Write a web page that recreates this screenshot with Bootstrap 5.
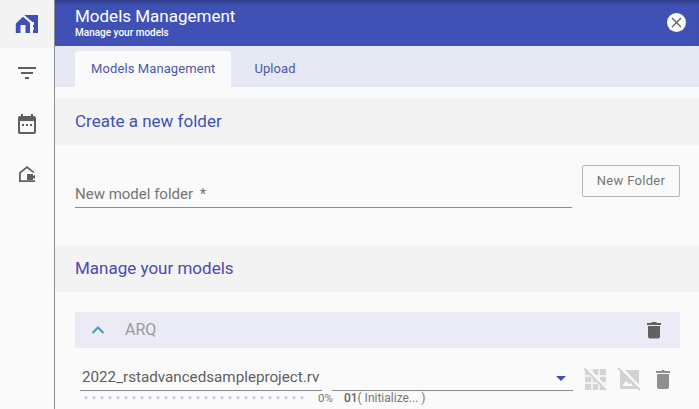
<!DOCTYPE html>
<html lang="en">
<head>
  <meta charset="UTF-8">
  <title>Models Management</title>
  <link href="https://cdn.jsdelivr.net/npm/bootstrap@5.3.0/dist/css/bootstrap.min.css" rel="stylesheet">
  <style>
    html, body { height: 100%; }
    body {
      font-family: Roboto, "Liberation Sans", sans-serif;
      background: #fafafa;
      overflow: hidden;
    }
    .side-rail {
      width: 55px;
      height: 409px;
      background: #fafafa;
      border-right: 1px solid #8e8e8e;
    }
    .rail-item { height: 50px; }
    .rail-item.is-active { height: 48px; background: #f3f3f3; }
    .rail-item.is-low { margin-top: 1px; }
    .main-pane { width: 644px; }
    .top-title {
      height: 46px;
      background: #3f51b5;
      color: #fff;
      padding: 6px 13px 0 20px;
      box-shadow: inset 0 5px 4px -3px rgba(0, 0, 0, .3);
    }
    .top-title h1 { font-size: 17px; font-weight: 400; line-height: 21px; margin: 0; }
    .top-title p { font-size: 10px; line-height: 11px; margin: 0; font-weight: 500; }
    .close-dot {
      width: 19px;
      height: 19px;
      background: #fafafa;
      border-radius: 50%;
      margin-top: 7px;
    }
    .tab-strip { height: 41px; background: #e6e8f3; padding: 5px 0 0 20px; }
    .tab-item {
      font-size: 13px;
      letter-spacing: .1px;
      height: 36px;
      line-height: 36px;
      padding: 0 16px;
      color: #4a57b0;
      border-radius: 4px 4px 0 0;
    }
    .tab-item.is-active { background: #fafafa; }
    .tab-item.is-plain { padding: 0 23px; }
    .section-band {
      height: 47px;
      margin-top: 11px;
      background: #f3f3f3;
      color: #3f51b5;
      font-size: 17px;
      line-height: 47px;
      padding-left: 20px;
    }
    .folder-row { height: 100px; padding: 20px 19px 0 20px; }
    .fake-field {
      flex: 1;
      height: 43px;
      margin-right: 10px;
      border-bottom: 1px solid #8c8c8c;
      color: #757575;
      font-size: 15px;
      padding-top: 19px;
      line-height: 20px;
    }
    .req-mark { margin-left: 3px; }
    .new-btn {
      width: 98px;
      height: 32px;
      font-size: 13px;
      letter-spacing: .3px;
      color: #757575;
      background: transparent;
      border: 1px solid #b5b5b5;
      border-radius: 2px;
      padding: 0;
    }
    .section-band.is-second { margin-top: 0; color: #5048ad; }
    .group-head {
      height: 36px;
      margin: 20px 19px 0 20px;
      background: #eaebf4;
      padding: 0 19px 0 15px;
      color: #9a9a9a;
      font-size: 16px;
    }
    .group-head span { margin-left: 19px; }
    .model-row { padding: 8px 27px 0 25px; }
    .model-select {
      flex: 1;
      position: relative;
      height: 35px;
      border-bottom: 1px solid #8c8c8c;
      color: #5f5f5f;
      font-size: 15.2px;
      line-height: 42px;
      padding-left: 2px;
    }
    .select-gap {
      position: absolute;
      left: 242px;
      bottom: -1px;
      width: 10px;
      height: 1px;
      background: #fafafa;
    }
    .select-caret {
      position: absolute;
      right: 7px;
      top: 20px;
      border-left: 5px solid transparent;
      border-right: 5px solid transparent;
      border-top: 5px solid #3f51b5;
    }
    .model-tools { gap: 10px; margin-left: 10px; padding-top: 11px; }
    .progress-row { padding-left: 27px; height: 14px; color: #777; font-size: 11.5px; line-height: 14px; }
    .dot-line {
      width: 226px;
      height: 5px;
      margin-top: 4px;
      background-image: radial-gradient(circle, #ccd1ea 1.4px, transparent 1.9px);
      background-size: 8px 5px;
    }
    .pct-label { margin-left: 10px; }
    .step-label { margin-left: 11px; font-size: 12px; }
    .step-label b { font-weight: 500; color: #666; }
  </style>
</head>
<body>
  <div class="d-flex">
    <nav class="side-rail flex-shrink-0">
      <div class="rail-item is-active d-flex align-items-center justify-content-center">
        <svg width="24" height="24" viewBox="0 0 24 24">
          <path fill="#3f51b5" d="M9 3h14v18h-6V11z"/>
          <path fill="#fafafa" d="M7.500 4.500 9 3l8.500 7H19v3h-1v2h1v3h-1v3h-2.500V11z"/>
          <path fill="#3f51b5" d="M.8 11.500 8 4.700l7 6V21h-4.500v-8H5.500v8H.8z"/>
        </svg>
      </div>
      <div class="rail-item d-flex align-items-center justify-content-center">
        <svg width="24" height="24" viewBox="0 0 24 24"><path fill="#5f5f5f" d="M3 6h18v2H3zM6 11h12v2H6zM10 16h4v2h-4z"/></svg>
      </div>
      <div class="rail-item is-low d-flex align-items-center justify-content-center">
        <svg width="24" height="24" viewBox="0 0 24 24"><path fill="#5f5f5f" d="M19 4h-1V2h-2v2H8V2H6v2H5a2 2 0 0 0-2 2v14a2 2 0 0 0 2 2h14a2 2 0 0 0 2-2V6a2 2 0 0 0-2-2zm0 16H5V9h14zM7 12h2v2H7zm4 0h2v2h-2zm4 0h2v2h-2z"/></svg>
      </div>
      <div class="rail-item d-flex align-items-center justify-content-center">
        <svg width="24" height="24" viewBox="0 0 24 24"><path fill="#5f5f5f" d="M12 4 4 10.500V20h16v-1.800H5.800v-6.900L12 6.300l5.500 4.300H20z"/><path fill="#5f5f5f" d="M12 12h6v2l2-1v4l-2-1v2h-6z"/></svg>
      </div>
    </nav>
    <main class="main-pane">
      <header class="top-title d-flex justify-content-between">
        <div>
          <h1>Models Management</h1>
          <p>Manage your models</p>
        </div>
        <div class="close-dot d-flex align-items-center justify-content-center">
          <svg width="11" height="11" viewBox="0 0 11 11"><path stroke="#5f5f5f" stroke-width="1.300" d="M1 1l9 9M10 1l-9 9"/></svg>
        </div>
      </header>
      <div class="tab-strip d-flex">
        <div class="tab-item is-active">Models Management</div>
        <div class="tab-item is-plain">Upload</div>
      </div>
      <div class="section-band">Create a new folder</div>
      <div class="folder-row d-flex align-items-start">
        <div class="fake-field">New model folder<span class="req-mark"> *</span></div>
        <button class="new-btn" type="button">New Folder</button>
      </div>
      <div class="section-band is-second">Manage your models</div>
      <div class="group-head d-flex align-items-center justify-content-between">
        <div class="d-flex align-items-center">
          <svg width="16" height="10" viewBox="0 0 16 10"><path fill="none" stroke="#4f9db5" stroke-width="2.200" d="M2.500 8 8 2.500 13.500 8"/></svg>
          <span>ARQ</span>
        </div>
        <svg width="14" height="18" viewBox="0 0 14 18"><path fill="#616161" d="M1 5h12v10.500a2 2 0 0 1-2 2H3a2 2 0 0 1-2-2zM0 2h4l1-1h4l1 1h4v2H0z"/></svg>
      </div>
      <div class="model-row d-flex">
        <div class="model-select">
          2022_rstadvancedsampleproject.rv
          <i class="select-gap"></i>
          <i class="select-caret"></i>
        </div>
        <div class="model-tools d-flex">
          <svg width="24" height="24" viewBox="0 0 24 24"><path fill="#d4d4d4" d="M2 2h21v21H2z"/><path stroke="#fafafa" stroke-width="1.400" d="M2 9h21M2 16h21M9 2v21M16 2v21"/><path stroke="#fafafa" stroke-width="3" d="M3 0l21 22"/><path stroke="#d4d4d4" stroke-width="2" d="M1 1l22 22"/></svg>
          <svg width="24" height="24" viewBox="0 0 24 24"><path fill="#d2d2d2" d="M3 3h19v19H3z"/><path fill="#fafafa" d="M5 19l4-5 3 3 1.500-1 2.500 3z"/><path stroke="#fafafa" stroke-width="3" d="M3 0l21 22"/><path stroke="#d2d2d2" stroke-width="2" d="M1 1l22 22"/></svg>
          <svg width="21" height="24" viewBox="0 0 21 24"><path fill="#8f8f8f" d="M6 7h12v13a2 2 0 0 1-2 2H8a2 2 0 0 1-2-2zM5 4h5l1-1h2l1 1h5v2H5z"/></svg>
        </div>
      </div>
      <div class="progress-row d-flex">
        <div class="dot-line"></div>
        <div class="pct-label">0%</div>
        <div class="step-label"><b>01</b>( Initialize... )</div>
      </div>
    </main>
  </div>
  <script src="https://cdn.jsdelivr.net/npm/bootstrap@5.3.0/dist/js/bootstrap.bundle.min.js"></script>
</body>
</html>
